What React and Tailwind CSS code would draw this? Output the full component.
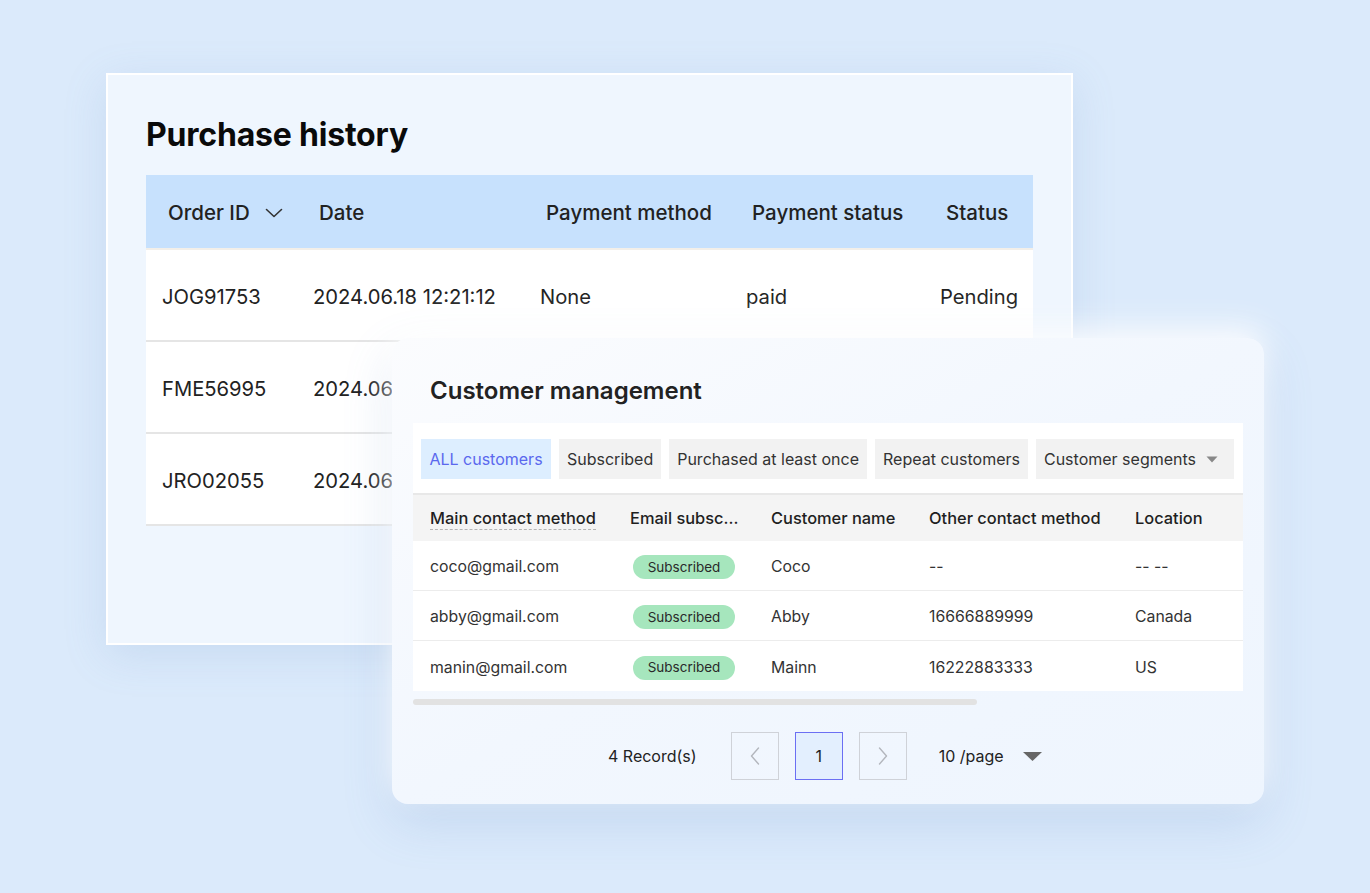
import React from "react";

const font = { fontFamily: "Inter, 'Noto Sans', sans-serif" };

function PurchaseHistory() {
  const rows = [
    ["JOG91753", "2024.06.18 12:21:12", "None", "paid", "Pending"],
    ["FME56995", "2024.06.18 12:21:12", "None", "paid", "Pending"],
    ["JRO02055", "2024.06.18 12:21:12", "None", "paid", "Pending"],
  ];
  return (
    <div className="ml-[106px] mt-[73px] w-[967px] h-[572px] border-2 border-white bg-[#eff6fe] px-[38px] pt-[40px] shadow-[0_10px_40px_rgba(110,150,200,0.18)]">
      <h1 className="text-[32px] leading-[40px] font-bold text-[#0a0a0a] tracking-[-0.2px]">Purchase history</h1>
      <div className="mt-[20px] w-[887px]">
        <div className="grid grid-cols-[151px_227px_206px_194px_1fr] h-[73px] items-center bg-[#c7e1fd] pl-[22px] pt-[3px] text-[20.5px] font-medium text-[#222]">
          <div className="flex items-center gap-[15px]">
            <span>Order ID</span>
            <svg width="18" height="10" viewBox="0 0 18 10" fill="none" stroke="#333" strokeWidth="1.6" strokeLinecap="round" strokeLinejoin="round">
              <path d="M1.5 1.5 L9 8.5 L16.5 1.5" />
            </svg>
          </div>
          <div>Date</div>
          <div>Payment method</div>
          <div>Payment status</div>
          <div>Status</div>
        </div>
        <div className="h-[2px] bg-[#f3efe9]" />
        {rows.map((r, i) => (
          <div key={i} className="border-b-2 border-[#e5e5e5]">
            <div className="grid grid-cols-[151px_227px_206px_194px_1fr] h-[90px] items-center bg-white pl-[16px] pt-[4px] text-[20.2px] text-[#222]">
              {r.map((c, j) => (
                <div key={j}>{c}</div>
              ))}
            </div>
          </div>
        ))}
      </div>
    </div>
  );
}

function Badge() {
  return (
    <span className="inline-flex items-center justify-center w-[102px] h-[24px] rounded-full bg-[#a6e6bd] text-[13.5px] text-[#2a2a2a]">
      Subscribed
    </span>
  );
}

function CustomerManagement() {
  const tabs = ["Subscribed", "Purchased at least once", "Repeat customers"];
  const rows = [
    ["coco@gmail.com", "Coco", "--", "-- --"],
    ["abby@gmail.com", "Abby", "16666889999", "Canada"],
    ["manin@gmail.com", "Mainn", "16222883333", "US"],
  ];
  const cols = "grid grid-cols-[200px_141px_158px_206px_1fr] pl-[17px]";
  return (
    <div className="absolute left-[392px] top-[338px] w-[872px] h-[466px] rounded-[16px] bg-gradient-to-br from-[#fbfcfe] via-[#f2f7fe] to-[#eef5fe] shadow-[0_-12px_30px_rgba(255,255,255,0.85),0_18px_50px_rgba(100,140,200,0.2)]">
      <h2 className="pl-[38px] pt-[37px] text-[24px] leading-[32px] font-semibold text-[#222]">Customer management</h2>
      <div className="mx-[21px] mt-[16px] bg-white">
        <div className="flex gap-[8px] pl-[8px] pt-[16px] pb-[14px] text-[16px]">
          <div className="h-[40px] w-[130px] flex items-center justify-center bg-[#ddeeff] text-[#5a68ee]">ALL customers</div>
          {tabs.map((t) => (
            <div key={t} className="h-[40px] flex items-center px-[8px] bg-[#f2f2f2] text-[#333]">{t}</div>
          ))}
          <div className="h-[40px] w-[198px] flex items-center gap-[10px] px-[8px] bg-[#f2f2f2] text-[#333]">
            <span>Customer segments</span>
            <svg width="12" height="7" viewBox="0 0 12 7"><path d="M0.5 0.5 L11.5 0.5 L6 6.5 Z" fill="#888" /></svg>
          </div>
        </div>
        <div className={`${cols} h-[48px] items-center border-t-2 border-[#e8e8e8] bg-[#f4f4f4] pt-[1px] text-[16.4px] font-medium text-[#1f1f1f]`}>
          <div><span className="border-b-[1.5px] border-dashed border-[#b5b5b5] pb-[1px]">Main contact method</span></div>
          <div>Email subsc...</div>
          <div>Customer name</div>
          <div>Other contact method</div>
          <div>Location</div>
        </div>
        {rows.map((r, i) => (
          <div key={i} className={`${cols} h-[50px] items-center pt-[3px] text-[15.8px] text-[#333] ${i < 2 ? "border-b border-[#ececec]" : ""}`}>
            <div>{r[0]}</div>
            <div className="pl-[3px]"><Badge /></div>
            <div>{r[1]}</div>
            <div>{r[2]}</div>
            <div>{r[3]}</div>
          </div>
        ))}
      </div>
      <div className="mx-[21px] mt-[8px] w-[564px] h-[6px] rounded-full bg-[#e2e2e2]" />
      <div className="flex items-center pl-[216px] mt-[27px] text-[16px] text-[#222]">
        <span>4 Record(s)</span>
        <div className="ml-[34px] w-[48px] h-[48px] border-[1.5px] border-[#cfd2d8] flex items-center justify-center">
          <svg width="10" height="18" viewBox="0 0 10 18" fill="none" stroke="#b3b6bd" strokeWidth="1.4" strokeLinecap="round" strokeLinejoin="round"><path d="M8.5 1 L1.5 9 L8.5 17" /></svg>
        </div>
        <div className="ml-[16px] w-[48px] h-[48px] border-[1.5px] border-[#6b6ff3] bg-[#e3effe] flex items-center justify-center">1</div>
        <div className="ml-[16px] w-[48px] h-[48px] border-[1.5px] border-[#cfd2d8] flex items-center justify-center">
          <svg width="10" height="18" viewBox="0 0 10 18" fill="none" stroke="#b3b6bd" strokeWidth="1.4" strokeLinecap="round" strokeLinejoin="round"><path d="M1.5 1 L8.5 9 L1.5 17" /></svg>
        </div>
        <span className="ml-[32px]">10 /page</span>
        <svg className="ml-[19px]" width="19" height="9" viewBox="0 0 19 9"><path d="M0 0 L19 0 L9.5 9 Z" fill="#666" /></svg>
      </div>
    </div>
  );
}

export default function App() {
  return (
    <div style={font} className="relative w-[1370px] h-[893px] overflow-hidden bg-[#dbeafb] flex flex-col">
      <PurchaseHistory />
      <CustomerManagement />
    </div>
  );
}
